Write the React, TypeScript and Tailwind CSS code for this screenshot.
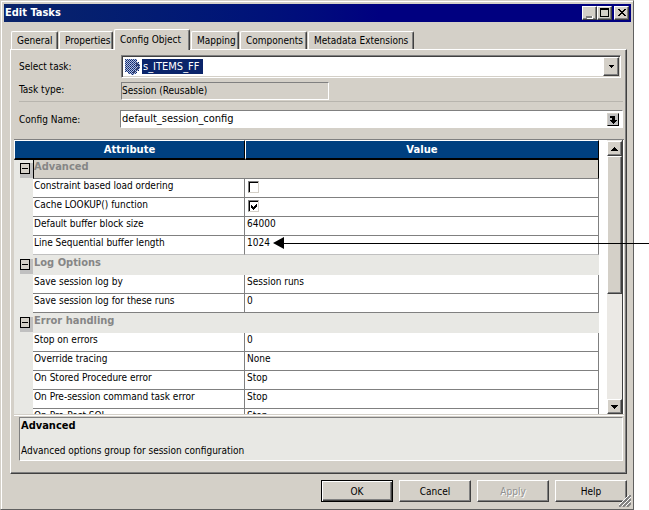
import React, { useState } from 'react'
import clsx from 'clsx'

type Row = {
  label: string
  value?: string
  checked?: boolean
}

type Group = {
  name: string
  selected?: boolean
  rows: Row[]
}

const TABS = ['General', 'Properties', 'Config Object', 'Mapping', 'Components', 'Metadata Extensions']

const GROUPS: Group[] = [
  {
    name: 'Advanced',
    selected: true,
    rows: [
      { label: 'Constraint based load ordering', checked: false },
      { label: 'Cache LOOKUP() function', checked: true },
      { label: 'Default buffer block size', value: '64000' },
      { label: 'Line Sequential buffer length', value: '1024' },
    ],
  },
  {
    name: 'Log Options',
    rows: [
      { label: 'Save session log by', value: 'Session runs' },
      { label: 'Save session log for these runs', value: '0' },
    ],
  },
  {
    name: 'Error handling',
    rows: [
      { label: 'Stop on errors', value: '0' },
      { label: 'Override tracing', value: 'None' },
      { label: 'On Stored Procedure error', value: 'Stop' },
      { label: 'On Pre-session command task error', value: 'Stop' },
      { label: 'On Pre-Post SQL', value: 'Stop' },
    ],
  },
]

const RAISED =
  'bg-[#d4d0c8] border border-t-white border-l-white border-r-[#404040] border-b-[#404040] shadow-[inset_-1px_-1px_0_#808080]'

function CaptionButton({ label, children }: { label: string; children: React.ReactNode }) {
  return (
    <button type="button" aria-label={label} className={clsx(RAISED, 'h-[14px] w-[15px] shrink-0')}>
      <svg viewBox="0 0 13 12" className="h-[12px] w-[13px]" shapeRendering="crispEdges">
        {children}
      </svg>
    </button>
  )
}

function TitleBar() {
  return (
    <div className="flex h-[18px] items-center bg-gradient-to-r from-[#0a246a] to-[#000080] to-60% pr-[2px] pl-px">
      <h1 className="flex-1 text-[11px] leading-[18px] font-bold text-white">Edit Tasks</h1>
      <CaptionButton label="Minimize">
        <path d="M3 9h6v2h-6z" fill="#808080" />
        <path d="M4 11h6v1h-6zM9 9h1v2h-1z" fill="#fff" />
      </CaptionButton>
      <CaptionButton label="Maximize">
        <path d="M2 1h9v9h-9zM3 3v6h7v-6z" fill="#000" fillRule="evenodd" />
      </CaptionButton>
      <div className="w-[2px]" />
      <CaptionButton label="Close">
        <path
          d="M3 2h2v1h1v1h2v-1h1v-1h2v1h-1v1h-1v1h-1v1h1v1h1v1h1v1h-2v-1h-1v-1h-2v1h-1v1h-2v-1h1v-1h1v-1h1v-1h-1v-1h-1v-1h-1z"
          fill="#000"
        />
      </CaptionButton>
    </div>
  )
}

function TabStrip({ active, onChange }: { active: string; onChange: (tab: string) => void }) {
  return (
    <div role="tablist" className="relative -mb-px flex items-end pt-[7px] pl-px">
      {TABS.map((tab) => {
        const isActive = tab === active
        return (
          <button
            key={tab}
            type="button"
            role="tab"
            aria-selected={isActive}
            onClick={() => onChange(tab)}
            className={clsx(
              'rounded-t-[2px] border border-b-0 border-t-white border-l-white border-r-[#404040] bg-[#d4d0c8] pl-[5px] text-left whitespace-nowrap shadow-[inset_-1px_0_0_#808080]',
              isActive ? 'h-[21px] pb-[2px]' : 'mb-px mr-px h-[18px]',
              tab === 'General' && 'w-[47px]',
              tab === 'Properties' && 'w-[54px]',
              tab === 'Config Object' && 'mr-px w-[76px]',
              tab === 'Mapping' && 'w-[48px]',
              tab === 'Components' && 'w-[67px]',
              tab === 'Metadata Extensions' && 'w-[106px]',
            )}
          >
            {tab}
          </button>
        )
      })}
    </div>
  )
}

function TaskIcon() {
  return (
    <svg viewBox="0 0 16 17" className="h-[17px] w-[16px] shrink-0" aria-hidden="true" shapeRendering="crispEdges">
      <defs>
        <pattern id="dither" width="2" height="2" patternUnits="userSpaceOnUse">
          <rect width="2" height="2" fill="#b4c0dc" />
          <rect width="1" height="1" fill="#0a246a" />
          <rect x="1" y="1" width="1" height="1" fill="#24408a" />
        </pattern>
      </defs>
      <path d="M1 1h12v3h2v2h1v5h-1v2h-2v2h-1v1h-2v1h-3v-1h-3v-2h-3z" fill="url(#dither)" />
      <path d="M12 4h1v2h1v1h-1v1h-1zM14 7h1v3h-1zM12 10h2v1h-1v2h-1zM10 13h1v2h-2v-1h1z" fill="#3c4468" />
    </svg>
  )
}

function Fields() {
  return (
    <div className="pt-[5px] pr-[3px] pl-[8px]">
      <div className="flex items-center">
        <label htmlFor="task" className="w-[102px] shrink-0">
          Select task:
        </label>
        <div className="mr-[2px] flex h-[23px] flex-1 items-center border border-t-[#808080] border-r-white border-b-white border-l-[#808080] bg-white pr-px pl-[2px] shadow-[inset_1px_1px_0_#404040,inset_-1px_-1px_0_#d4d0c8]">
          <TaskIcon />
          <div className="flex flex-1 pl-[2px]">
            <select
              id="task"
              className="h-[15px] w-[61px] appearance-none bg-[#0a246a] pl-px text-[11px] leading-[15px] text-white outline-none"
            >
              <option>s_ITEMS_FF</option>
            </select>
          </div>
          <button
            type="button"
            aria-label="Open task list"
            className={clsx(RAISED, 'flex h-[19px] w-[16px] items-center justify-center')}
          >
            <svg viewBox="0 0 7 4" className="h-[4px] w-[7px]" shapeRendering="crispEdges">
              <path d="M1 0h5v1h-1v1h-1v1h-1v-1h-1v-1h-1z" />
            </svg>
          </button>
        </div>
      </div>
      <div className="mt-[4px] flex items-start">
        <label htmlFor="taskType" className="w-[102px] shrink-0">
          Task type:
        </label>
        <input
          id="taskType"
          readOnly
          value="Session (Reusable)"
          className="h-[18px] w-[208px] border border-t-[#808080] border-r-white border-b-white border-l-[#808080] bg-[#d4d0c8] pb-px outline-none"
        />
      </div>
      <div className="mt-px h-px bg-[#b8b5ae]" />
      <div className="mt-[8px] flex items-center">
        <label htmlFor="configName" className="w-[101px] shrink-0">
          Config Name:
        </label>
        <div className="flex h-[18px] flex-1 items-center border border-t-[#808080] border-r-white border-b-white border-l-[#808080] bg-white pr-[3px]">
          <input
            id="configName"
            defaultValue="default_session_config"
            className="h-[16px] min-w-0 flex-1 pb-px pl-px text-[11px] outline-none"
          />
          <button
            type="button"
            aria-label="Browse configurations"
            className="h-[13px] w-[12px] border border-t-[#d4d0c8] border-r-black border-b-black border-l-[#d4d0c8] bg-[#c0c0c0]"
          >
            <svg viewBox="0 0 10 11" className="h-[11px] w-[10px]" shapeRendering="crispEdges">
              <path d="M2 2h5v4h2v1h-1v1h-1v1h-1v1h-1v-1h-1v-1h-1v-1h-1v-1h2v-2h-2z" />
            </svg>
          </button>
        </div>
      </div>
    </div>
  )
}

function Toggle({ open, name, onClick }: { open: boolean; name: string; onClick: () => void }) {
  return (
    <button
      type="button"
      aria-expanded={open}
      aria-label={name}
      onClick={onClick}
      className="ml-[6px] block h-[17px] w-[13px] bg-[#c0c0c0]"
    >
      <svg viewBox="0 0 13 17" className="h-[17px] w-[13px]" shapeRendering="crispEdges">
        <path d="M0 0h13v2h-13z" fill="#e8e8e4" />
        <path d="M0.500 2.500h9v10h-9z" fill="#d4d0c8" stroke="#000" />
        <path d="M2 7h6v1h-6z" />
        {!open && <path d="M4.500 5h1v5h-1z" />}
      </svg>
    </button>
  )
}

function AttributeRow({ row, last }: { row: Row; last: boolean }) {
  const id = row.label.replace(/\W+/g, '-')
  const line = last ? 'border-b-[#c0c0c0]' : 'border-b-[#808080]'
  return (
    <tr className="h-[19px]">
      <td className="bg-[#e8e8e4]" />
      <td className={clsx('border-r border-b border-r-[#808080] bg-white pl-px', line)}>
        <label htmlFor={row.checked !== undefined ? id : undefined} className="block h-[18px] leading-[14px] whitespace-nowrap">
          {row.label}
        </label>
      </td>
      <td className={clsx('border-r border-b border-r-[#808080] bg-white', line)}>
        {row.checked === undefined ? (
          <div className="h-[18px] pl-[2px] leading-[14px]">{row.value}</div>
        ) : (
          <div className="flex h-[18px] items-start pt-[2px] pl-[3px]">
            <span className="grid h-[12px] w-[11px]">
              <input
                id={id}
                type="checkbox"
                defaultChecked={row.checked}
                className="peer col-start-1 row-start-1 h-[12px] w-[11px] appearance-none border border-t-[#808080] border-r-[#d4d0c8] border-b-[#d4d0c8] border-l-[#808080] bg-white shadow-[inset_1px_1px_0_#000]"
              />
              <svg
                viewBox="0 0 11 12"
                className="pointer-events-none col-start-1 row-start-1 hidden h-[12px] w-[11px] peer-checked:block"
                shapeRendering="crispEdges"
              >
                <path d="M3 5h1v1h1v1h1v-1h1v-1h1v-1h1v3h-1v1h-1v1h-1v1h-1v-1h-1v-1h-1z" />
              </svg>
            </span>
          </div>
        )}
      </td>
    </tr>
  )
}

function AttributeTable() {
  const [closed, setClosed] = useState<string[]>([])

  const toggle = (name: string) =>
    setClosed((prev) => (prev.includes(name) ? prev.filter((n) => n !== name) : [...prev, name]))

  return (
    <div className="mt-[11px] mr-[2px] ml-[3px] flex h-[276px] overflow-hidden border-t border-b border-t-[#808080] border-b-[#d4d0c8] bg-white">
      <div className="min-w-0 flex-1 overflow-hidden">
        <table className="w-full table-fixed border-separate border-spacing-0">
          <colgroup>
            <col className="w-[19px]" />
            <col className="w-[212px]" />
            <col />
          </colgroup>
          <thead>
            <tr className="h-[20px] font-['DejaVu_Sans',sans-serif] font-bold text-white [&>th]:border-t [&>th]:border-b-2 [&>th]:border-t-white [&>th]:border-b-black [&>th]:bg-[#004080]">
              <th colSpan={2} className="border-r border-l border-r-black border-l-white leading-[17px]">
                Attribute
              </th>
              <th className="border-r border-l border-r-black border-l-white leading-[17px]">Value</th>
            </tr>
          </thead>
          {GROUPS.map((group, i) => {
            const open = !closed.includes(group.name)
            return (
              <tbody key={group.name}>
                <tr className={group.selected ? 'h-[19px]' : 'h-[20px]'}>
                  <td className="bg-[#e8e8e4] align-middle">
                    <Toggle open={open} name={group.name} onClick={() => toggle(group.name)} />
                  </td>
                  <th
                    colSpan={2}
                    className={clsx(
                      'text-left align-top text-[11px] font-bold text-[#868686]',
                      group.selected
                        ? 'border-r border-b border-l border-r-black border-b-[#808080] border-l-black bg-[#d4d0c8] leading-[14px]'
                        : 'bg-[#e8e8e4] pl-px leading-[16px]',
                    )}
                  >
                    {group.name}
                  </th>
                </tr>
                {open &&
                  group.rows.map((row, j) => (
                    <AttributeRow key={row.label} row={row} last={i === 0 && j === group.rows.length - 1} />
                  ))}
              </tbody>
            )
          })}
        </table>
      </div>
      <div className="mr-px ml-[8px] flex w-[16px] shrink-0 flex-col border-r border-[#404040] bg-[#ebe9e5] pt-px">
        <button type="button" aria-label="Scroll up" className={clsx(RAISED, 'flex h-[15px] items-center justify-center')}>
          <svg viewBox="0 0 7 4" className="h-[4px] w-[7px]" shapeRendering="crispEdges">
            <path d="M3 0h1v1h1v1h1v1h1v1h-7v-1h1v-1h1v-1h1z" />
          </svg>
        </button>
        <div className={clsx(RAISED, 'h-[138px]')} />
        <div className="flex-1" />
        <button type="button" aria-label="Scroll down" className={clsx(RAISED, 'flex h-[15px] items-center justify-center')}>
          <svg viewBox="0 0 7 4" className="h-[4px] w-[7px]" shapeRendering="crispEdges">
            <path d="M0 0h7v1h-1v1h-1v1h-1v1h-1v-1h-1v-1h-1v-1h-1z" />
          </svg>
        </button>
      </div>
    </div>
  )
}

function DialogButton({ label, primary, disabled }: { label: string; primary?: boolean; disabled?: boolean }) {
  return (
    <button
      type="button"
      disabled={disabled}
      className={clsx(
        'h-[22px] w-[72px] border bg-[#d4d0c8]',
        primary
          ? 'border-black shadow-[inset_1px_1px_0_#fff,inset_-1px_-1px_0_#404040,inset_-2px_-2px_0_#808080]'
          : 'border-t-white border-r-[#404040] border-b-[#404040] border-l-white shadow-[inset_-1px_-1px_0_#808080]',
        disabled && 'text-[#909090] [text-shadow:1px_1px_0_#fff]',
      )}
    >
      {label}
    </button>
  )
}

export default function App() {
  const [tab, setTab] = useState('Config Object')

  return (
    <div className="relative bg-white font-['DejaVu_Sans_Condensed','DejaVu_Sans',sans-serif] text-[10px] leading-[15px] text-black">
      <div className="mr-[15px] border border-t-[#d4d0c8] border-r-[#606060] border-b-[#606060] border-l-[#d4d0c8] bg-[#d4d0c8] shadow-[inset_1px_1px_0_#fff]">
        <div className="pt-[3px] pr-[2px] pl-[3px]">
          <TitleBar />
        </div>
        <div className="pr-[6px] pl-[9px]">
          <TabStrip active={tab} onChange={setTab} />
          <div
            role="tabpanel"
            className="border border-t-white border-r-[#404040] border-b-[#404040] border-l-white pb-[12px] shadow-[inset_-1px_-1px_0_#808080]"
          >
            <Fields />
            <AttributeTable />
            <div className="mr-[2px] ml-[3px] h-px bg-white" />
            <div className="mt-px mr-[3px] ml-[8px] h-[44px] border border-t-[#808080] border-r-white border-b-white border-l-[#808080] bg-[#e8e8e4] pl-px">
              <p className="text-[11px] leading-[15px] font-bold">Advanced</p>
              <p className="mt-[10px]">Advanced options group for session configuration</p>
            </div>
          </div>
        </div>
        <div className="flex items-start justify-end gap-[6px] pt-[6px] pl-[9px]">
          <DialogButton label="OK" primary />
          <DialogButton label="Cancel" />
          <DialogButton label="Apply" disabled />
          <div className="flex">
            <DialogButton label="Help" />
            <svg viewBox="0 0 12 12" className="mt-[15px] -ml-[8px] mr-[2px] h-[12px] w-[12px]" aria-hidden="true">
              <path d="M0 12L12 0M4 12L12 4M8 12L12 8" stroke="#808080" strokeWidth="2" />
              <path d="M-1 11L11 -1M3 11L12 2M7 11L12 6" stroke="#fff" />
            </svg>
          </div>
        </div>
        <div className="h-[2px]" />
      </div>
      <svg className="pointer-events-none absolute top-[237px] right-0 left-[273px] h-[12px] w-[376px]" aria-hidden="true">
        <path d="M0 6L11 0V12z" />
        <path d="M10 6h366v1h-366z" shapeRendering="crispEdges" />
      </svg>
    </div>
  )
}
